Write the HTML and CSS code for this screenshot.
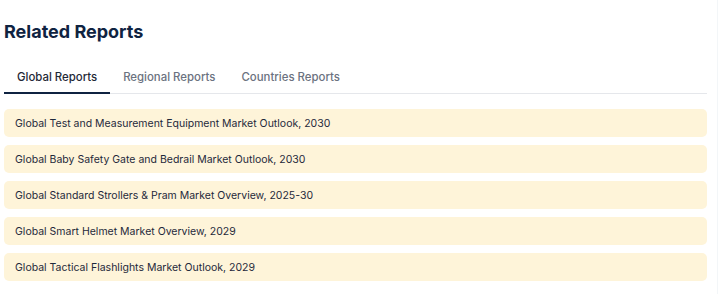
FILE: index.html
```html
<!DOCTYPE html>
<html lang="en">
<head>
    <meta charset="UTF-8">
    <meta name="viewport" content="width=device-width, initial-scale=1.0">
    <title>Related Reports</title>
    <link rel="stylesheet" href="styles.css">
</head>
<body>
    <div class="related">
        <h2>Related Reports</h2>
        <div class="tabs">
            <button class="tab active">Global Reports</button>
            <button class="tab">Regional Reports</button>
            <button class="tab">Countries Reports</button>
        </div>
        <ul class="report-list">
            <li><a href="#">Global Test and Measurement Equipment Market Outlook, 2030</a></li>
            <li><a href="#">Global Baby Safety Gate and Bedrail Market Outlook, 2030</a></li>
            <li><a href="#">Global Standard Strollers &amp; Pram Market Overview, 2025-30</a></li>
            <li><a href="#">Global Smart Helmet Market Overview, 2029</a></li>
            <li><a href="#">Global Tactical Flashlights Market Outlook, 2029</a></li>
        </ul>
    </div>
</body>
</html>
```

FILE: styles.css
```css
body {
    font-family: Inter, "Noto Sans", sans-serif;
    background: #fff;
    margin: 0;
    border-right: 1px solid #f3f6f8;
    min-height: 294px;
    box-sizing: border-box;
}

.related {
    width: 703px;
    margin-left: 4px;
    padding-top: 20px;
}

h2 {
    font-size: 18px;
    font-weight: 700;
    line-height: 24px;
    color: #0f2341;
    margin: 0 0 19px;
}

.tabs {
    display: flex;
    border-bottom: 1px solid #e5e7eb;
}

.tab {
    background: none;
    border: none;
    border-bottom: 2px solid transparent;
    margin-bottom: -1px;
    padding: 7px 13px 8px;
    font-family: inherit;
    font-size: 11.4px;
    font-weight: 500;
    line-height: 14px;
    color: #6b7280;
    cursor: pointer;
}

.tab.active {
    color: #1f2937;
    border-bottom-color: #0f2341;
}

.report-list {
    list-style: none;
    margin: 15px 0 0;
    padding: 0;
    display: flex;
    flex-direction: column;
    gap: 8px;
}

.report-list li a {
    display: block;
    background-color: #fef4d9;
    border-radius: 5px;
    padding: 8px 11px 6px;
    font-size: 10.5px;
    line-height: 14px;
    color: #1e293b;
    text-decoration: none;
}
```
